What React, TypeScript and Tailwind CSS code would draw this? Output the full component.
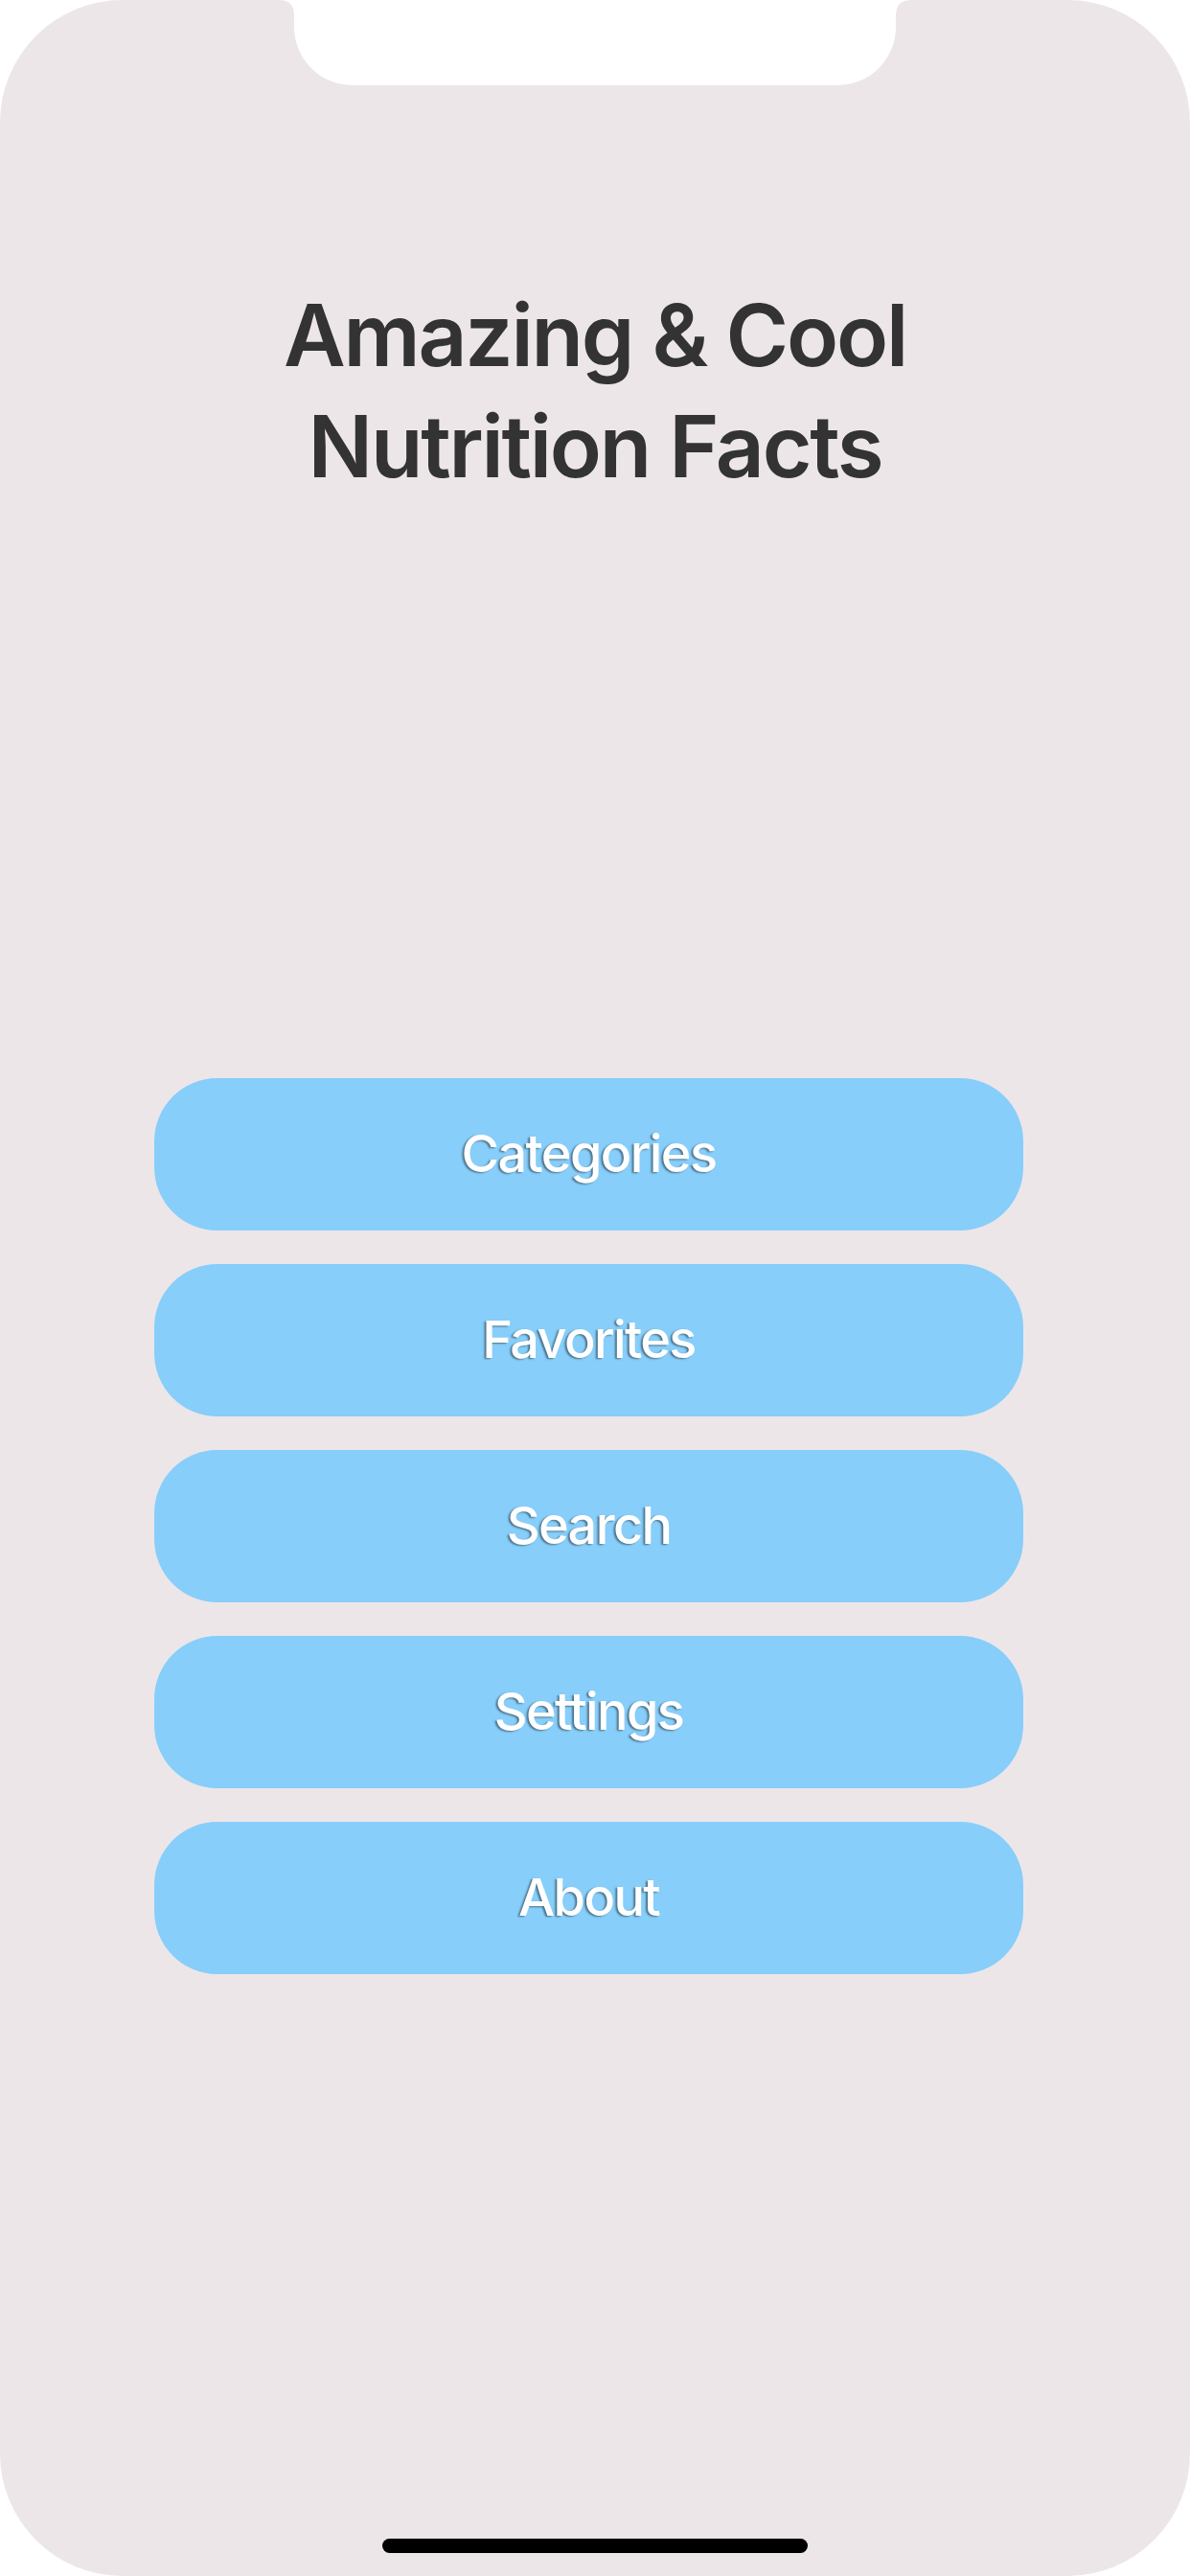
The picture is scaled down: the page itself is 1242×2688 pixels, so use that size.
import React from 'react';

// Home screen of the nutrition facts app, drawn on an iPhone XS Max sized canvas.

const menuItems = ['Categories', 'Favorites', 'Search', 'Settings', 'About'];

const Notch: React.FC = () => (
  <svg
    className="absolute left-0 top-0"
    width="1242"
    height="90"
    viewBox="0 0 1242 90"
    aria-hidden="true"
  >
    <path
      d="M291 0 Q307 0 307 16 V28 A61 61 0 0 0 368 89 H874 A61 61 0 0 0 935 28 V16 Q935 0 951 0 Z"
      fill="#ffffff"
    />
  </svg>
);

const App: React.FC = () => {
  return (
    <div className="w-[1242px] h-[2688px] bg-white">
      <div
        className="relative flex h-full w-full flex-col items-center overflow-hidden rounded-[128px] bg-[#ece6e9]"
        style={{ fontFamily: 'Inter, "Noto Sans", "Liberation Sans", sans-serif' }}
      >
        <Notch />

        <h1 className="pt-[292px] text-center text-[89px] font-semibold leading-[116px] tracking-[-2.2px] text-[#333333]">
          Amazing &amp; Cool
          <br />
          Nutrition Facts
        </h1>

        <nav className="mt-[601px] ml-[161px] flex w-[907px] flex-col gap-[35px] self-start">
          {menuItems.map((label) => (
            <button
              key={label}
              type="button"
              className="flex h-[159px] w-full items-center justify-center rounded-[66px] bg-[#87cefa] pb-[2px] text-[54px] font-medium tracking-[-1.6px] text-white [text-shadow:-2px_1px_2px_rgba(0,0,0,0.45)]"
            >
              {label}
            </button>
          ))}
        </nav>

        <div className="mb-[24px] mt-auto h-[15px] w-[444px] rounded-full bg-black" />
      </div>
    </div>
  );
};

export default App;
